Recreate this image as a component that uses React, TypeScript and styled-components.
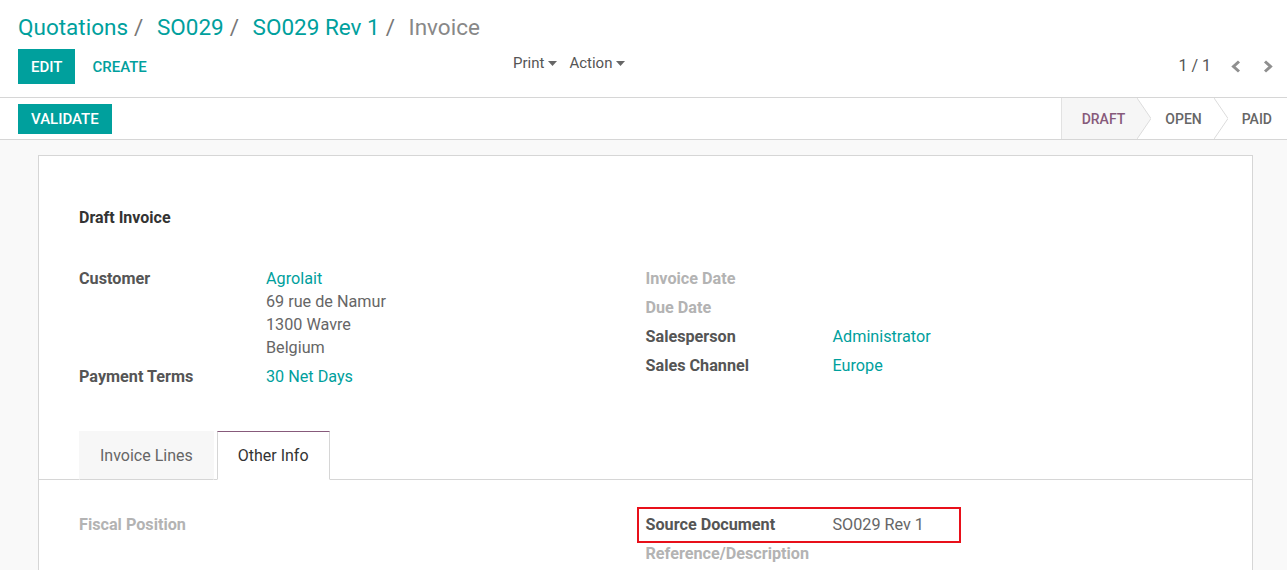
import React from "react";
import styled, { createGlobalStyle } from "styled-components";

const GlobalStyle = createGlobalStyle`
    body {
        margin: 0;
        font-family: Roboto, "Liberation Sans", sans-serif;
        background: #f9f9f9;
        color: #4c4c4c;
    }
`;

const TEAL = "#00A09D";
const PURPLE = "#875A7B";

const SPage = styled.div`
    display: flex;
    flex-direction: column;
    width: 100%;
    min-height: 570px;
    overflow: hidden;
`;

const SControlPanel = styled.div`
    background: #fff;
    padding: 10px 14px 13px 18px;
    border-bottom: 1px solid #d6d6d6;
`;

const SBreadcrumbs = styled.ol`
    display: flex;
    margin: 0;
    padding: 0;
    list-style: none;
    font-size: 22.5px;
    line-height: 34px;

    li + li::before {
        content: "/\\00a0";
        color: #777;
        padding: 0 8px 0 6px;
    }
`;

const SCrumb = styled.li<{ $active?: boolean }>`
    color: ${(p) => (p.$active ? "#888" : TEAL)};
`;

const SControlRow = styled.div`
    display: grid;
    grid-template-columns: 495px 1fr auto;
    align-items: start;
    margin-top: 5px;
`;

const SButtons = styled.div`
    display: flex;
    align-items: center;
    gap: 4px;
`;

const SButton = styled.button<{ $primary?: boolean }>`
    font-family: inherit;
    font-size: 15px;
    font-weight: 500;
    text-transform: uppercase;
    border: none;
    cursor: pointer;
    height: 35px;
    padding: 0 13px;
    background: ${(p) => (p.$primary ? TEAL : "transparent")};
    color: ${(p) => (p.$primary ? "#fff" : TEAL)};
`;

const SSidebar = styled.div`
    display: flex;
    gap: 12px;
    padding-top: 3px;
`;

const SDropdown = styled.div`
    display: flex;
    align-items: center;
    gap: 4px;
    font-size: 15px;
    color: #555;
    line-height: 22px;
`;

const SPager = styled.div`
    display: flex;
    align-items: center;
    gap: 20px;
    font-size: 16px;
    color: #555;
    padding-top: 6px;
    line-height: 22px;
`;

const SPagerArrows = styled.div`
    display: flex;
    align-items: center;
    gap: 22px;
`;

const SStatusBar = styled.div`
    display: flex;
    align-items: center;
    justify-content: space-between;
    height: 41px;
    background: #fff;
    border-bottom: 1px solid #d6d6d6;
    padding-left: 18px;
`;

const SValidate = styled.button`
    font-family: inherit;
    font-size: 15px;
    font-weight: 500;
    height: 30px;
    padding: 0 13px;
    border: none;
    background: ${TEAL};
    color: #fff;
    cursor: pointer;
`;

const SSteps = styled.div`
    display: flex;
    align-self: stretch;
    border-left: 1px solid #e2e2e2;
`;

const SStep = styled.div<{ $active?: boolean; $first?: boolean; $last?: boolean }>`
    display: flex;
    align-items: center;
    font-size: 14px;
    font-weight: 500;
    padding: 0 ${(p) => (p.$last ? "15px" : "12px")} 0 ${(p) => (p.$first ? "20px" : "14px")};
    background: ${(p) => (p.$active ? "#f6f6f6" : "#fff")};
    color: ${(p) => (p.$active ? PURPLE : "#666")};
`;

const SSheetBg = styled.div`
    padding: 15px 34px 0 38px;
    background: #f9f9f9;
`;

const SSheet = styled.div`
    background: #fff;
    border: 1px solid #d6d6d6;
    padding-top: 50px;
    min-height: 500px;
`;

const SSheetInner = styled.div`
    padding: 0 40px;
`;

const STitle = styled.div`
    font-size: 16px;
    font-weight: 700;
    color: #333;
    line-height: 23px;
    margin-bottom: 35px;
`;

const SGroups = styled.div`
    display: grid;
    grid-template-columns: 1fr 1fr;
`;

const SGroup = styled.div`
    display: flex;
    flex-direction: column;
`;

const SField = styled.div`
    position: relative;
    display: grid;
    grid-template-columns: 187px 1fr;
    padding: 3px 0;
    font-size: 16.2px;
    line-height: 23px;
`;

const SLabel = styled.div<{ $muted?: boolean }>`
    font-weight: 700;
    color: ${(p) => (p.$muted ? "#b3b3b3" : "#555")};
`;

const SValue = styled.div<{ $link?: boolean }>`
    color: ${(p) => (p.$link ? TEAL : "#666")};
`;

const SHighlight = styled.div`
    position: absolute;
    left: -9px;
    top: -3px;
    width: 320px;
    height: 32px;
    border: 2px solid #e8101a;
    pointer-events: none;
`;

const SNotebook = styled.div`
    margin-top: 40px;
`;

const STabs = styled.div`
    display: flex;
    gap: 3px;
    padding-left: 40px;
    border-bottom: 1px solid #d6d6d6;
`;

const STab = styled.div<{ $active?: boolean }>`
    font-size: 16px;
    line-height: 23px;
    padding: 12px 20px 12px;
    margin-bottom: -1px;
    color: ${(p) => (p.$active ? "#333" : "#666")};
    background: ${(p) => (p.$active ? "#fff" : "#f7f7f7")};
    border: 1px solid ${(p) => (p.$active ? "#d6d6d6" : "transparent")};
    border-top: 1px solid ${(p) => (p.$active ? PURPLE : "transparent")};
    border-bottom: 1px solid ${(p) => (p.$active ? "#fff" : "#d6d6d6")};
`;

const STabContent = styled.div`
    padding: 30px 40px 0;
`;

const Caret = () => (
    <svg width="9" height="5" viewBox="0 0 9 5">
        <polygon points="0,0 9,0 4.5,5" fill="#666" />
    </svg>
);

const Chevron = ({ dir }: { dir: "left" | "right" }) => (
    <svg width="10" height="13" viewBox="0 0 10 13">
        <polyline
            points={dir === "left" ? "8,1.5 2.5,6.5 8,11.5" : "2,1.5 7.5,6.5 2,11.5"}
            fill="none"
            stroke="#8f8f8f"
            strokeWidth="3"
        />
    </svg>
);

const StepArrow = ({ active }: { active?: boolean }) => (
    <svg width="14" height="41" viewBox="0 0 14 41" style={{ display: "block", background: "#fff" }}>
        <polygon points="0,0 14,20.5 0,41" fill={active ? "#f6f6f6" : "#fff"} />
        <polyline points="0,0 14,20.5 0,41" fill="none" stroke="#dcdcdc" strokeWidth="1" />
    </svg>
);

const App = () => {
    return (
        <SPage>
            <GlobalStyle />
            <SControlPanel>
                <SBreadcrumbs>
                    <SCrumb>Quotations</SCrumb>
                    <SCrumb>SO029</SCrumb>
                    <SCrumb>SO029 Rev 1</SCrumb>
                    <SCrumb $active>Invoice</SCrumb>
                </SBreadcrumbs>
                <SControlRow>
                    <SButtons>
                        <SButton $primary>Edit</SButton>
                        <SButton>Create</SButton>
                    </SButtons>
                    <SSidebar>
                        <SDropdown>
                            Print <Caret />
                        </SDropdown>
                        <SDropdown>
                            Action <Caret />
                        </SDropdown>
                    </SSidebar>
                    <SPager>
                        <span>1 / 1</span>
                        <SPagerArrows>
                            <Chevron dir="left" />
                            <Chevron dir="right" />
                        </SPagerArrows>
                    </SPager>
                </SControlRow>
            </SControlPanel>

            <SStatusBar>
                <SValidate>VALIDATE</SValidate>
                <SSteps>
                    <SStep $active $first>DRAFT</SStep>
                    <StepArrow active />
                    <SStep>OPEN</SStep>
                    <StepArrow />
                    <SStep $last>PAID</SStep>
                </SSteps>
            </SStatusBar>

            <SSheetBg>
                <SSheet>
                    <SSheetInner>
                        <STitle>Draft Invoice</STitle>
                        <SGroups>
                            <SGroup>
                                <SField>
                                    <SLabel>Customer</SLabel>
                                    <div>
                                        <SValue $link>Agrolait</SValue>
                                        <SValue>69 rue de Namur</SValue>
                                        <SValue>1300 Wavre</SValue>
                                        <SValue>Belgium</SValue>
                                    </div>
                                </SField>
                                <SField>
                                    <SLabel>Payment Terms</SLabel>
                                    <SValue $link>30 Net Days</SValue>
                                </SField>
                            </SGroup>
                            <SGroup>
                                <SField>
                                    <SLabel $muted>Invoice Date</SLabel>
                                    <SValue />
                                </SField>
                                <SField>
                                    <SLabel $muted>Due Date</SLabel>
                                    <SValue />
                                </SField>
                                <SField>
                                    <SLabel>Salesperson</SLabel>
                                    <SValue $link>Administrator</SValue>
                                </SField>
                                <SField>
                                    <SLabel>Sales Channel</SLabel>
                                    <SValue $link>Europe</SValue>
                                </SField>
                            </SGroup>
                        </SGroups>
                    </SSheetInner>

                    <SNotebook>
                        <STabs>
                            <STab>Invoice Lines</STab>
                            <STab $active>Other Info</STab>
                        </STabs>
                        <STabContent>
                            <SGroups>
                                <SGroup>
                                    <SField>
                                        <SLabel $muted>Fiscal Position</SLabel>
                                        <SValue />
                                    </SField>
                                </SGroup>
                                <SGroup>
                                    <SField>
                                        <SLabel>Source Document</SLabel>
                                        <SValue>SO029 Rev 1</SValue>
                                        <SHighlight />
                                    </SField>
                                    <SField>
                                        <SLabel $muted>Reference/Description</SLabel>
                                        <SValue />
                                    </SField>
                                </SGroup>
                            </SGroups>
                        </STabContent>
                    </SNotebook>
                </SSheet>
            </SSheetBg>
        </SPage>
    );
};

export default App;
